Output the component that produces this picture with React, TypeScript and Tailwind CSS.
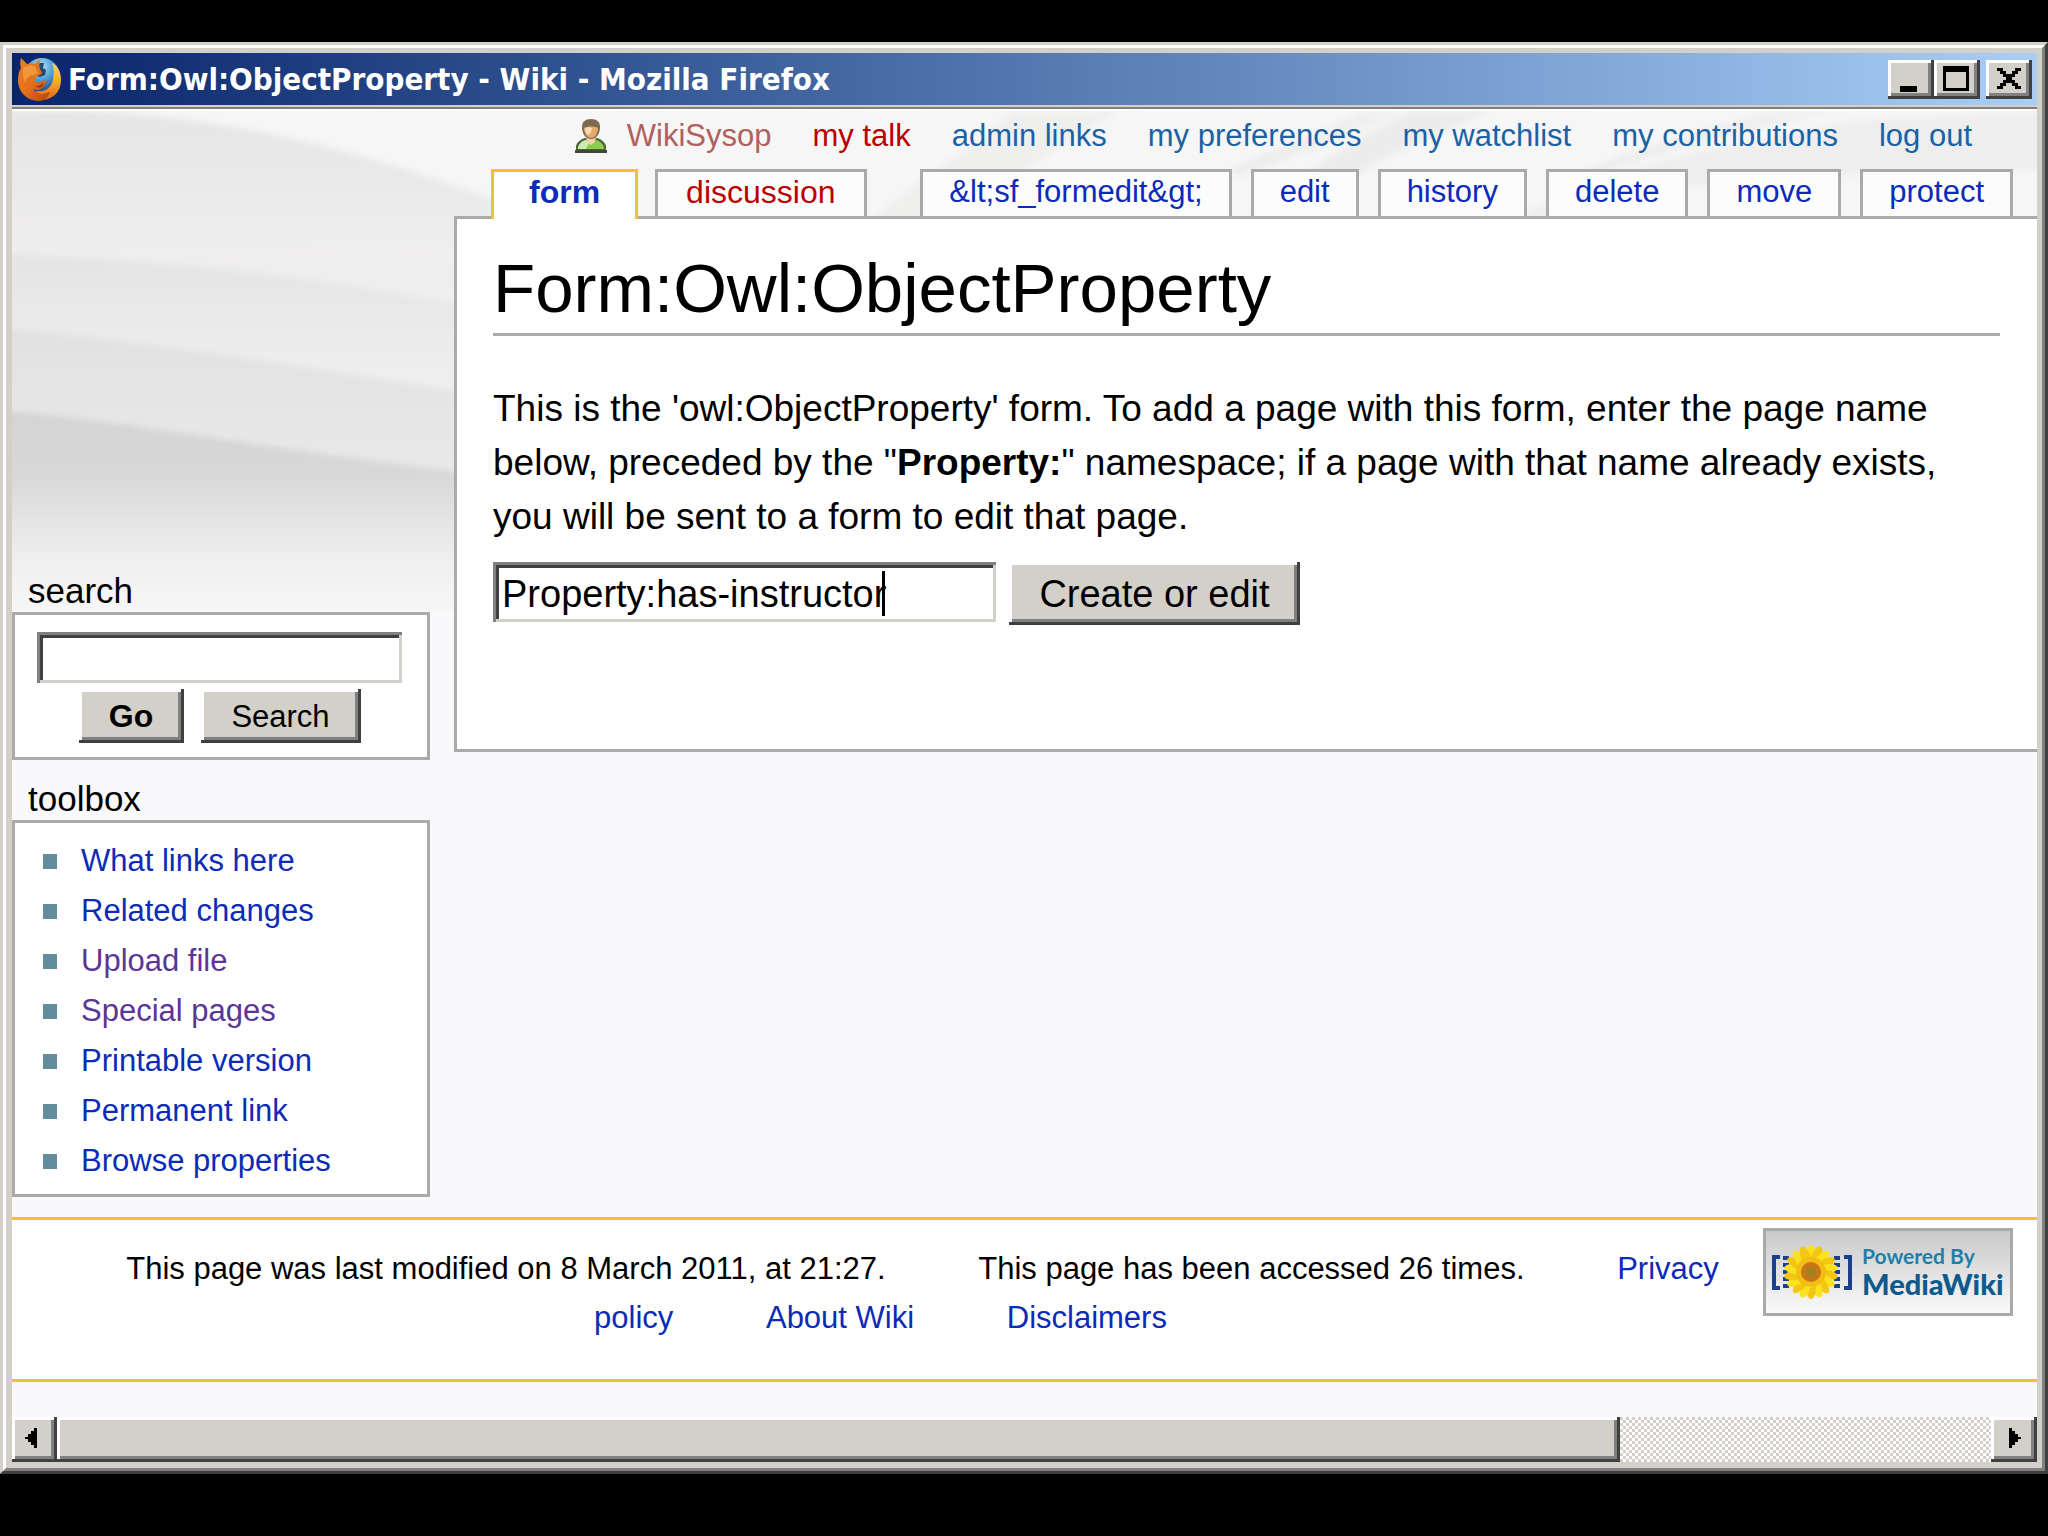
import React from "react";

const raised =
  "bg-[#d2d0c9] shadow-[inset_-3px_-3px_#404040,inset_3px_3px_#ffffff,inset_-6px_-6px_#808080]";
const sunken =
  "bg-white outline-none shadow-[inset_3px_3px_#808080,inset_-3px_-3px_#d2d0c9,inset_6px_6px_#404040]";

function FirefoxIcon() {
  return (
    <svg viewBox="0 0 48 48" className="h-12 w-12 shrink-0" aria-hidden="true">
      <defs>
        <radialGradient id="globe" cx="45%" cy="25%" r="75%">
          <stop offset="0" stopColor="#b5e6f8" />
          <stop offset="0.5" stopColor="#4a9bd4" />
          <stop offset="1" stopColor="#173a80" />
        </radialGradient>
        <linearGradient id="fox" x1="0" y1="0" x2="0.9" y2="1">
          <stop offset="0" stopColor="#e8832c" />
          <stop offset="0.55" stopColor="#e5701a" />
          <stop offset="1" stopColor="#b8450c" />
        </linearGradient>
        <linearGradient id="tail" x1="0" y1="0" x2="0" y2="1">
          <stop offset="0" stopColor="#f6d65a" />
          <stop offset="0.55" stopColor="#f2a52c" />
          <stop offset="1" stopColor="#de6416" />
        </linearGradient>
      </defs>
      <circle cx="26" cy="21" r="18" fill="url(#globe)" />
      <path d="M24 8l4 0-1 5 3 2-1 5-5 2-6-2-1-8z" fill="#12305f" opacity="0.85" />
      <path d="M36 8c6 3 9 9 9 17 0 12-8 20-20 20-6 0-10-2-13-5l10-4c8 1 14-4 15-12 1-6 1-11-1-16z" fill="url(#tail)" />
      <path
        d="M5 3c2 2 4 4 6 6 3-1 6-1 8 0 2-3 4-4 6-4-2 3-2 6-1 9l2 4c-1 2-3 2-5 3-1 1-1 3-3 4 2 3 6 3 8 1 2-1 4 0 5 1-2 1-2 4-5 6-3 3-7 2-9 1 3 5 11 7 17 2-1 7-7 10-11 10C11 46 2 37 2 25c0-5 1-9 3-12-1-3-1-7 0-10z"
        fill="url(#fox)"
      />
      <path d="M8 12c4-2 8-2 12 0 0 3 1 5 3 6-4 1-5 3-8 2-3 2-5 4-6 8-2-5-3-11-1-16z" fill="#f3a144" opacity="0.75" />
      <path d="M17 29c3 3 7 3 10-1 1 4-4 7-10 1z" fill="#8a300c" />
    </svg>
  );
}

function UserIcon() {
  return (
    <svg viewBox="0 0 32 36" className="h-9 w-8 shrink-0" aria-hidden="true">
      <path d="M1 35v-7c1-4 5-7 9-8h12c4 1 8 4 9 8v7z" fill="#4c6636" />
      <path d="M3 31c0-4 3-8 8-9l5 4 5-4c5 1 8 5 8 9z" fill="#8ccc4e" />
      <path d="M3 31c0-4 3-8 8-9l3 3-3 6z" fill="#cdeab4" />
      <path d="M0 32h32v3H0z" fill="#3f4838" />
      <path d="M11 19h10l-1 5-4 3-4-3z" fill="#f4d3a8" />
      <path d="M7 9c0-5 3-8 9-8s9 3 9 8c0 6-3 12-9 12S7 15 7 9z" fill="#7d6a50" />
      <path d="M9 10c2-2 12-2 14 0 0 5-3 10-7 10s-7-5-7-10z" fill="#e5a96c" />
      <path d="M10 11c2-2 5-2 7-1 0 4-2 6-4 7-2-1-3-4-3-6z" fill="#fbd9ae" />
    </svg>
  );
}

function PageBackdrop() {
  return (
    <svg
      viewBox="0 0 2025 500"
      preserveAspectRatio="xMinYMin slice"
      className="absolute inset-x-0 top-0 h-[500px] w-full"
      aria-hidden="true"
    >
      <defs>
        <linearGradient id="fold1" x1="0" y1="0" x2="0" y2="1">
          <stop offset="0" stopColor="#e6e6e6" />
          <stop offset="0.35" stopColor="#eae9e9" />
          <stop offset="1" stopColor="#f5f3f4" />
        </linearGradient>
        <linearGradient id="fold2" x1="0" y1="0" x2="0" y2="1">
          <stop offset="0" stopColor="#e5e4e4" />
          <stop offset="1" stopColor="#f3f2f3" />
        </linearGradient>
        <linearGradient id="fold3" x1="0" y1="0" x2="0" y2="1">
          <stop offset="0" stopColor="#e2e1e1" />
          <stop offset="1" stopColor="#ebeaeb" />
        </linearGradient>
        <linearGradient id="fold4" x1="0" y1="0" x2="0" y2="1">
          <stop offset="0" stopColor="#d4d3d3" />
          <stop offset="0.3" stopColor="#d9d8d9" />
          <stop offset="0.7" stopColor="#f1f0f1" />
          <stop offset="1" stopColor="#f9f8fa" />
        </linearGradient>
        <linearGradient id="sweep" x1="0" y1="0" x2="1" y2="0.5">
          <stop offset="0" stopColor="#e4e4e4" />
          <stop offset="1" stopColor="#f6f5f6" />
        </linearGradient>
        <filter id="soft" x="-5%" y="-5%" width="110%" height="110%">
          <feGaussianBlur stdDeviation="3" />
        </filter>
      </defs>
      <rect width="2025" height="500" fill="#f6f6f6" />
      <g filter="url(#soft)">
        <path d="M-20 0C160 -5 300 22 480 88V200H-20z" fill="url(#fold1)" />
        <path d="M-20 104C150 112 330 130 480 165V230H-20z" fill="#eeedee" opacity="0.7" />
        <path d="M-20 142C150 150 330 165 480 202V310H-20z" fill="url(#fold2)" />
        <path d="M-20 216C150 232 330 262 480 285V380H-20z" fill="url(#fold3)" />
        <path d="M-20 298C130 312 300 345 480 364V520H-20z" fill="url(#fold4)" />
        <path d="M900 110C1000 80 1060 20 1110 0H1000C960 40 900 70 860 110z" fill="#efefee" />
        <path d="M1225 65C1300 40 1350 20 1392 0H1350C1300 25 1260 40 1215 60z" fill="url(#sweep)" />
        <path d="M1235 110C1290 60 1340 30 1400 0H1480C1420 25 1330 60 1290 110z" fill="#ececec" />
        <path d="M1580 65C1660 35 1760 15 1830 0H1760C1690 20 1620 40 1560 65z" fill="url(#sweep)" />
        <path d="M1500 110C1600 50 1700 40 1840 10L2040 0V60C1900 60 1640 60 1560 110z" fill="#eeeeee" />
      </g>
    </svg>
  );
}

function TitleBar() {
  const control = `${raised} flex h-[39px] w-[46px] items-center justify-center`;
  return (
    <header className="flex h-[52px] items-center bg-linear-to-r from-[#0a246a] to-[#a9cff7] pr-[5px] pl-1">
      <FirefoxIcon />
      <h1 className="ml-1 flex-1 font-['DejaVu_Sans_Condensed','DejaVu_Sans',sans-serif] text-[31px] leading-none font-bold whitespace-nowrap text-white">
        Form:Owl:ObjectProperty - Wiki - Mozilla Firefox
      </h1>
      <button type="button" aria-label="Minimize" className={control}>
        <svg viewBox="0 0 46 39" className="h-full w-full" shapeRendering="crispEdges">
          <path d="M12 26h17v6H12z" />
        </svg>
      </button>
      <button type="button" aria-label="Maximize" className={control}>
        <svg viewBox="0 0 46 39" className="h-full w-full" shapeRendering="crispEdges">
          <path d="M9 6h26v25H9zM12 12v16h20V12z" fillRule="evenodd" />
        </svg>
      </button>
      <button type="button" aria-label="Close" className={`${control} ml-[6px]`}>
        <svg viewBox="0 0 46 39" className="h-full w-full" shapeRendering="crispEdges">
          <path d="M11 8h6v3h3v3h6v-3h3V8h6v3h-3v3h-3v3h-3v3h3v3h3v3h3v3h-6v-3h-3v-3h-6v3h-3v3h-6v-3h3v-3h3v-3h3v-3h-3v-3h-3v-3h-3z" />
        </svg>
      </button>
    </header>
  );
}

const personalLinks = [
  { label: "my talk", color: "text-[#ba0000]" },
  { label: "admin links", color: "text-[#1a62a4]" },
  { label: "my preferences", color: "text-[#1a62a4]" },
  { label: "my watchlist", color: "text-[#1a62a4]" },
  { label: "my contributions", color: "text-[#1a62a4]" },
  { label: "log out", color: "text-[#1a62a4]" },
];

function PersonalBar() {
  return (
    <nav
      aria-label="Personal tools"
      className="flex h-[58px] items-center justify-end gap-[41px] pr-[65px] pb-2 text-[31px] leading-9 whitespace-nowrap"
    >
      <a href="#user" className="flex items-center gap-5 text-[#b0615c]">
        <UserIcon />
        WikiSysop
      </a>
      {personalLinks.map((l) => (
        <a key={l.label} href="#personal" className={l.color}>
          {l.label}
        </a>
      ))}
    </nav>
  );
}

const actionTabs = ["&lt;sf_formedit&gt;", "edit", "history", "delete", "move", "protect"];

function Tabs() {
  const tab = "h-[47px] border-[3px] border-b-0 border-[#aaaaaa] bg-[#fcfcfc]";
  return (
    <nav
      aria-label="Page views"
      className="flex pr-6 pl-[37px] text-[31px] leading-10 whitespace-nowrap"
    >
      <a
        href="#form"
        className="relative z-10 -mb-[3px] h-[50px] border-[3px] border-b-0 border-[#f6bd39] bg-white px-[35px] text-[32px] font-bold text-[#0b2bb8]"
      >
        form
      </a>
      <a href="#discussion" className={`${tab} ml-[17px] px-7 text-[32px] text-[#ba0000]`}>
        discussion
      </a>
      <div className="ml-auto flex gap-[19px]">
        {actionTabs.map((t) => (
          <a key={t} href="#view" className={`${tab} px-[26px] text-[#0b2bb8]`}>
            {t}
          </a>
        ))}
      </div>
    </nav>
  );
}

function Content() {
  return (
    <main className="h-[536px] border-[3px] border-r-0 border-[#aaaaaa] bg-white pr-[37px] pl-9">
      <h2 className="mt-7 h-[89px] border-b-[3px] border-[#aaaaaa] text-[69px] leading-[84px] whitespace-nowrap">
        Form:Owl:ObjectProperty
      </h2>
      <form onSubmit={(e) => e.preventDefault()}>
        <p className="mt-[46px] text-[37px] leading-[54px]">
          This is the 'owl:ObjectProperty' form. To add a page with this form, enter the page name
          below, preceded by the "<b>Property:</b>" namespace; if a page with that name already
          exists, you will be sent to a form to edit that page.
        </p>
        <div className="mt-[18px] flex items-start gap-[13px]">
          <div className="relative">
            <input
              aria-label="Page name"
              defaultValue="Property:has-instructor"
              className={`${sunken} block h-[60px] w-[503px] px-[9px] pt-1 text-[38px]`}
            />
            <span className="absolute top-[9px] left-[389px] h-[45px] w-[3px] bg-black" />
          </div>
          <button type="submit" className={`${raised} h-[63px] w-[291px] text-[38px] leading-none`}>
            Create or edit
          </button>
        </div>
      </form>
    </main>
  );
}

const tools = [
  { label: "What links here" },
  { label: "Related changes" },
  { label: "Upload file", visited: true },
  { label: "Special pages", visited: true },
  { label: "Printable version" },
  { label: "Permanent link" },
  { label: "Browse properties" },
];

function Sidebar() {
  return (
    <aside className="w-[418px] shrink-0 pt-[459px] pb-5">
      <h3 className="pl-4 text-[35px] leading-[42px]">
        <label htmlFor="q">search</label>
      </h3>
      <form
        onSubmit={(e) => e.preventDefault()}
        className="flex h-[148px] flex-col border-[3px] border-[#aaaaaa] bg-white pt-[17px] pr-[25px] pl-[22px]"
      >
        <input id="q" className={`${sunken} h-[51px] w-full px-2 text-[31px]`} />
        <div className="mt-[6px] flex justify-center gap-[17px] text-[32px] leading-none">
          <button type="submit" className={`${raised} h-[54px] w-[105px] font-bold`}>
            Go
          </button>
          <button type="submit" className={`${raised} h-[54px] w-[160px] text-[31px]`}>
            Search
          </button>
        </div>
      </form>
      <h3 className="mt-[18px] pl-4 text-[35px] leading-[42px]">toolbox</h3>
      <ul className="h-[377px] border-[3px] border-[#aaaaaa] bg-white pt-[13px] pl-7 text-[31px] leading-[50px]">
        {tools.map((t) => (
          <li key={t.label} className="flex items-center gap-6">
            <span className="h-[15px] w-[14px] bg-[#638c9c]" />
            <a href="#tool" className={t.visited ? "text-[#5a3696]" : "text-[#0b2bb8]"}>
              {t.label}
            </a>
          </li>
        ))}
      </ul>
    </aside>
  );
}

function SunflowerLogo() {
  const petals = Array.from({ length: 18 }, (_, i) => i * 20);
  return (
    <svg viewBox="0 0 84 66" className="h-[66px] w-[84px] shrink-0" aria-hidden="true">
      <g fill="none" stroke="#1c3f8c">
        <path d="M10 18H4v31h6M74 18h6v31h-6" strokeWidth="4" />
        <path d="M16 17v33M67 17v33" strokeWidth="6" strokeDasharray="4 3" />
      </g>
      {petals.map((a) => (
        <ellipse
          key={a}
          cx="41"
          cy="18"
          rx="5"
          ry="12"
          fill={a % 40 ? "#f3c614" : "#fbe21f"}
          transform={`rotate(${a} 41 33)`}
        />
      ))}
      <circle cx="41" cy="33" r="15" fill="#f2bd14" />
      <circle cx="41" cy="33" r="10" fill="#c9761a" />
      <circle cx="41" cy="33" r="5" fill="#a38220" />
    </svg>
  );
}

function Footer() {
  const item = "inline px-[42px]";
  return (
    <footer className="flex min-h-[165px] items-start border-y-[3px] border-[#f6bd39] bg-white pt-2 pr-6 pl-12">
      <ul className="flex-1 pt-4 text-center text-[31px] leading-[49px]">
        <li className={item}>This page was last modified on 8 March 2011, at 21:27.</li>{" "}
        <li className={item}>This page has been accessed 26 times.</li>{" "}
        <li className={item}>
          <a href="#privacy" className="text-[#0b2bb8]">
            Privacy policy
          </a>
        </li>{" "}
        <li className={item}>
          <a href="#about" className="text-[#0b2bb8]">
            About Wiki
          </a>
        </li>{" "}
        <li className={item}>
          <a href="#disclaimers" className="text-[#0b2bb8]">
            Disclaimers
          </a>
        </li>
      </ul>
      <a
        href="#mediawiki"
        className="ml-5 flex h-[88px] w-[250px] items-center border-[3px] border-[#aaaaaa] bg-linear-to-b from-[#c9c9c9] to-[#fafafa] pl-1 font-['Lato',sans-serif] whitespace-nowrap"
      >
        <SunflowerLogo />
        <span className="ml-2">
          <span className="block text-[21px] leading-6 font-bold text-[#1f7fa8]">Powered By</span>
          <span className="block text-[29px] leading-8 font-black text-[#0d5a8c]">MediaWiki</span>
        </span>
      </a>
    </footer>
  );
}

function ScrollBar() {
  return (
    <div className="flex h-[45px] bg-[conic-gradient(#ffffff_25%,#d2d0c9_0_50%,#ffffff_0_75%,#d2d0c9_0)] bg-[length:6px_6px]">
      <button type="button" aria-label="Scroll left" className={`${raised} h-full w-[45px]`}>
        <svg viewBox="0 0 45 45" className="h-full w-full" shapeRendering="crispEdges">
          <path d="M13 20h3v-3h3v-3h3v-3h3v20h-3v-3h-3v-3h-3v-3h-3z" />
        </svg>
      </button>
      <div className="flex-1 pr-[371px]">
        <div className={`${raised} h-full`} />
      </div>
      <button type="button" aria-label="Scroll right" className={`${raised} h-full w-[46px]`}>
        <svg viewBox="0 0 45 45" className="h-full w-full" shapeRendering="crispEdges">
          <path d="M29 20h-3v-3h-3v-3h-3v-3h-3v20h3v-3h3v-3h3v-3h3z" />
        </svg>
      </button>
    </div>
  );
}

export default function App() {
  return (
    <div className="min-h-screen bg-black py-[42px] font-['Liberation_Sans',Arial,sans-serif] text-black">
      <div className="border-3 border-t-[#d2d0c9] border-r-[#404040] border-b-[#404040] border-l-[#d2d0c9]">
        <div className="border-3 border-t-white border-r-[#808080] border-b-[#808080] border-l-white">
          <div className="border-[6px] border-t-[5px] border-r-[5px] border-[#d2d0c9]">
            <TitleBar />
            <div className="h-[6px] border-t-2 border-b-2 border-t-[#d2d0c9] border-b-white bg-[#808080]" />
            <div className="relative bg-[#f9f8fa]">
              <PageBackdrop />
              <div className="relative flex gap-6">
                <Sidebar />
                <div className="min-w-0 flex-1">
                  <PersonalBar />
                  <Tabs />
                  <Content />
                </div>
              </div>
              <div className="relative">
                <Footer />
                <div className="h-[35px]" />
                <ScrollBar />
              </div>
            </div>
          </div>
        </div>
      </div>
    </div>
  );
}
